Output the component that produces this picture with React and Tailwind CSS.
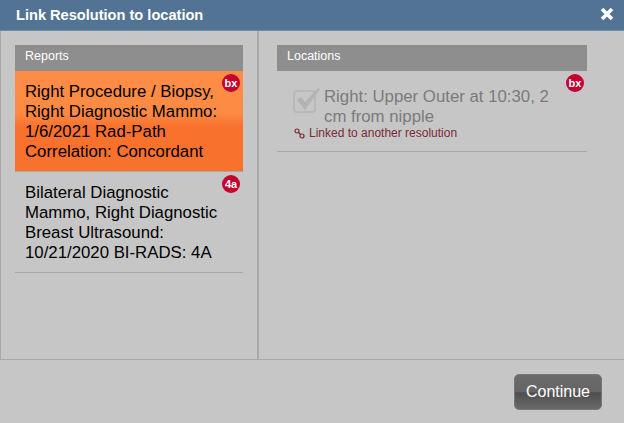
import React from "react";

const Badge = ({ label }) => (
  <span className="absolute right-[3px] top-[3px] flex h-[18px] w-[18px] items-center justify-center rounded-full bg-[#c5002f] text-[11px] leading-none font-bold text-white">
    {label}
  </span>
);

const PanelHeader = ({ title }) => (
  <div className="h-[26px] bg-[#8e8e8e] pl-[10px] text-[12.5px] leading-[23px] text-white">
    {title}
  </div>
);

const CheckIcon = () => (
  <svg width="27" height="28" viewBox="0 0 27 28" className="shrink-0">
    <rect x="1" y="5" width="21" height="21" rx="3" fill="none" stroke="#b9b9b9" strokeWidth="2" />
    <path d="M4 14l4-3 4 5L25 2l2 1-15 21z" fill="#b3b3b3" />
  </svg>
);

const LinkIcon = () => (
  <svg width="11" height="11" viewBox="0 0 11 11" fill="none" stroke="#7a2a35" strokeWidth="1.2" className="shrink-0">
    <circle cx="3" cy="3" r="2" />
    <circle cx="8" cy="8" r="2" />
    <path d="M4.5 4.5l2 2" />
  </svg>
);

const App = () => {
  return (
    <div className="flex h-[423px] w-[624px] flex-col overflow-hidden bg-[#c6c6c6] font-['Liberation_Sans',sans-serif]">
      <div className="flex h-[31px] shrink-0 items-center justify-between border-b border-[#6f8ba6] bg-[#527393] pr-[10px] pl-[16px]">
        <span className="pt-[1px] text-[14.6px] font-bold text-white">Link Resolution to location</span>
        <svg width="14" height="14" viewBox="0 0 14 14" stroke="white" strokeWidth="3.6" className="mb-[2px]">
          <path d="M2 2l10 10M12 2L2 12" />
        </svg>
      </div>

      <div className="flex h-[329px] shrink-0 border-b border-l border-[#a9a9a9]">
        <div className="w-[258px] shrink-0 border-r-2 border-[#a9a9a9] pt-[14px] pr-[14px] pl-[14px]">
          <PanelHeader title="Reports" />
          <div className="relative h-[101px] border-b border-[#a9a9a9] bg-[linear-gradient(#fd8d46_0%,#fc8a43_42%,#f8722e_56%,#f8722e_100%)] pt-[11px] pr-[22px] pl-[10px] text-[16.8px] leading-[20px] text-black">
            Right Procedure / Biopsy, Right Diagnostic Mammo: 1/6/2021 Rad-Path Correlation: Concordant
            <Badge label="bx" />
          </div>
          <div className="relative h-[101px] border-b border-[#a9a9a9] pt-[11px] pr-[22px] pl-[10px] text-[16.8px] leading-[20px] text-black">
            Bilateral Diagnostic Mammo, Right Diagnostic Breast Ultrasound: 10/21/2020 BI-RADS: 4A
            <Badge label="4a" />
          </div>
        </div>

        <div className="w-[328px] shrink-0 pt-[14px] pl-[18px]">
          <PanelHeader title="Locations" />
          <div className="relative h-[81px] border-b border-[#a9a9a9] pt-[15px] pr-[26px] pl-[16px]">
            <div className="flex gap-[4px]">
              <CheckIcon />
              <div className="pt-[1px] text-[16.8px] leading-[20px] text-[#7b7b7b]">
                Right: Upper Outer at 10:30, 2 cm from nipple
              </div>
            </div>
            <div className="-mt-[1px] flex items-center gap-[4px] pl-[1px] text-[12px] leading-[14px] text-[#7a2a35]">
              <LinkIcon />
              Linked to another resolution
            </div>
            <Badge label="bx" />
          </div>
        </div>
      </div>

      <div className="flex flex-1 items-start justify-end pt-[14px] pr-[22px]">
        <button className="h-[36px] w-[88px] rounded-[5px] border border-[#777] bg-[linear-gradient(#6b6b6b_0%,#656565_50%,#4e4e4e_52%,#6a6a6a_100%)] text-[16px] text-white">
          Continue
        </button>
      </div>
    </div>
  );
};

export default App;
